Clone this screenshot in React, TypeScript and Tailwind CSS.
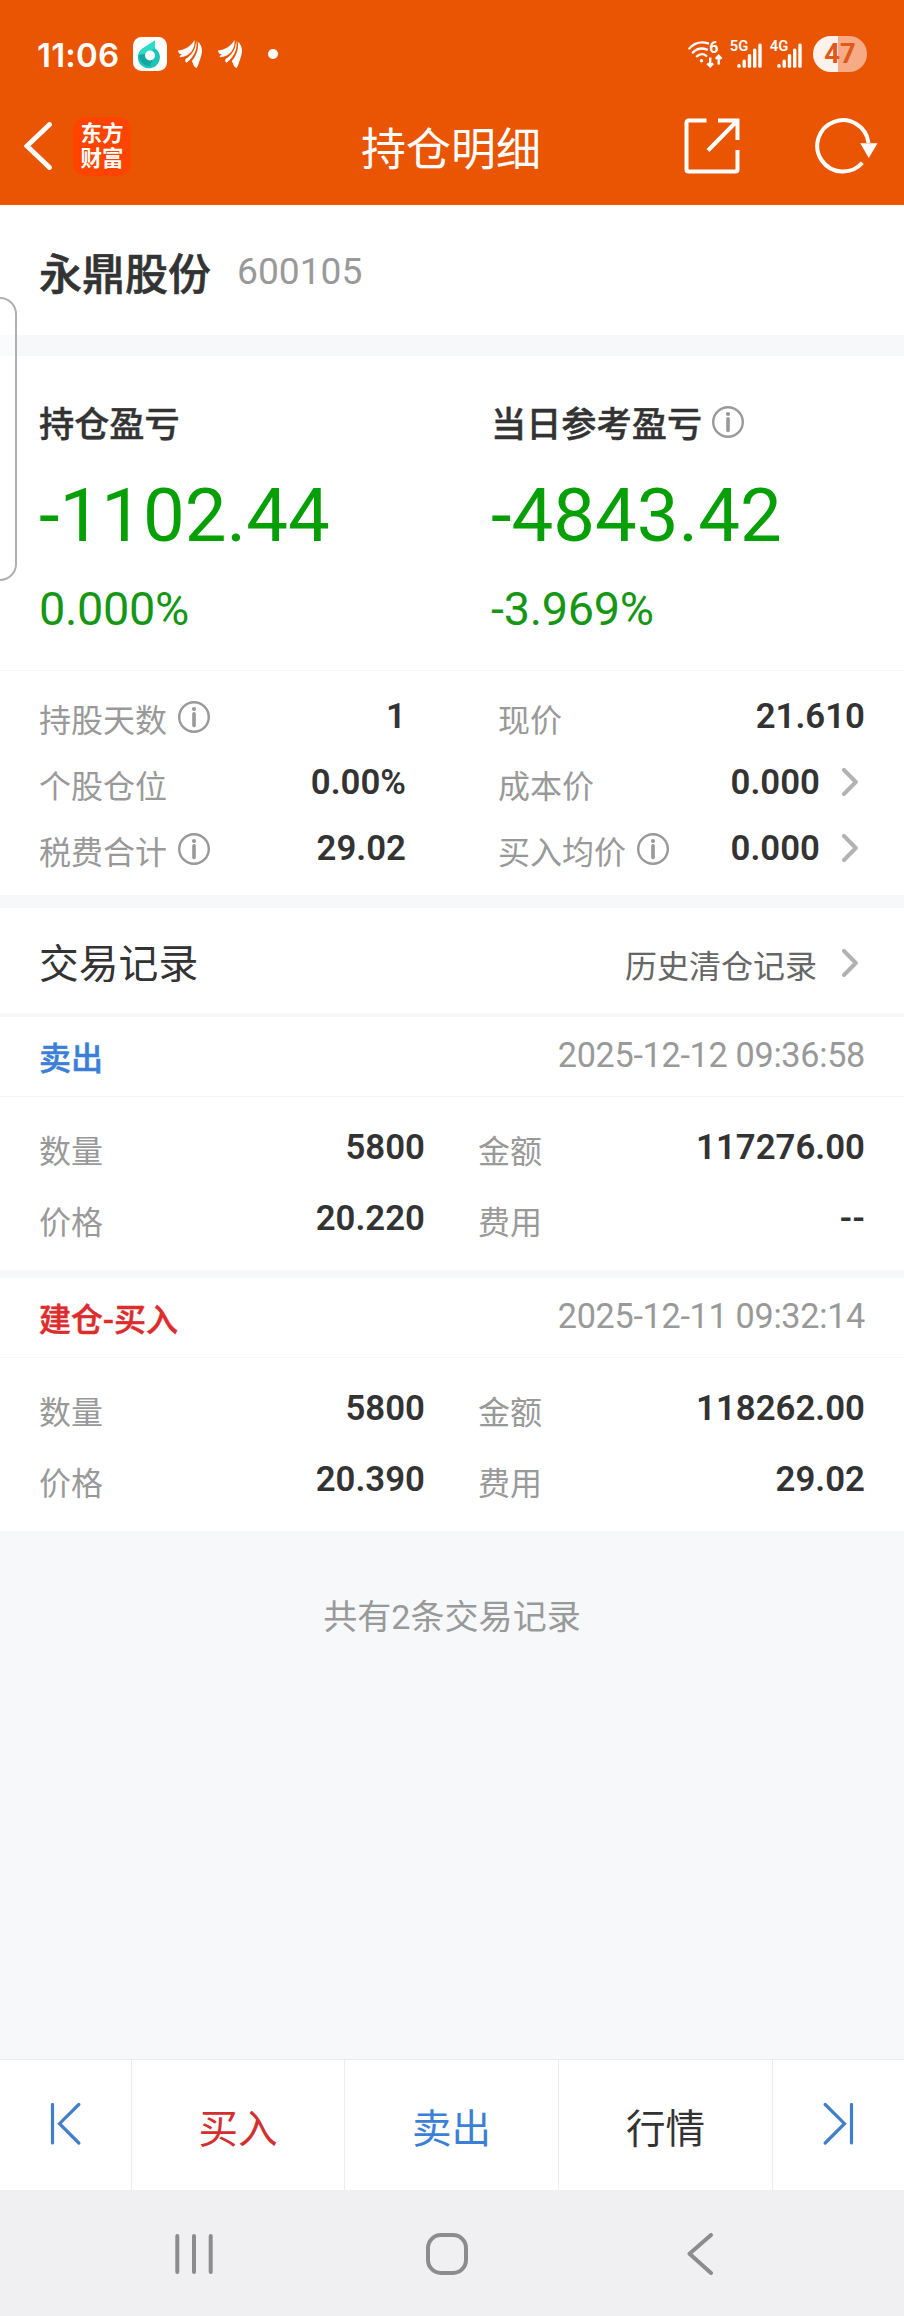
import type { ReactNode } from "react";

type Cell = { label: string; value: string; info?: boolean; link?: boolean };

type Trade = {
  title: string;
  color: string;
  time: string;
  left: Cell[];
  right: Cell[];
};

const POSITION_LEFT: Cell[] = [
  { label: "持股天数", value: "1", info: true },
  { label: "个股仓位", value: "0.00%" },
  { label: "税费合计", value: "29.02", info: true },
];

const POSITION_RIGHT: Cell[] = [
  { label: "现价", value: "21.610" },
  { label: "成本价", value: "0.000", link: true },
  { label: "买入均价", value: "0.000", info: true, link: true },
];

const TRADES: Trade[] = [
  {
    title: "卖出",
    color: "text-[#3c7fd6]",
    time: "2025-12-12 09:36:58",
    left: [
      { label: "数量", value: "5800" },
      { label: "价格", value: "20.220" },
    ],
    right: [
      { label: "金额", value: "117276.00" },
      { label: "费用", value: "--" },
    ],
  },
  {
    title: "建仓-买入",
    color: "text-[#dd2c2c]",
    time: "2025-12-11 09:32:14",
    left: [
      { label: "数量", value: "5800" },
      { label: "价格", value: "20.390" },
    ],
    right: [
      { label: "金额", value: "118262.00" },
      { label: "费用", value: "29.02" },
    ],
  },
];

function InfoIcon() {
  return (
    <svg className="size-8 shrink-0" viewBox="0 0 32 32" fill="none" stroke="#999">
      <circle cx="16" cy="16" r="14.800" strokeWidth="2.400" />
      <path d="M16 12.800v11.700" strokeWidth="3.600" strokeLinecap="round" />
      <circle cx="16" cy="8" r="2.100" fill="#999" stroke="none" />
    </svg>
  );
}

function ChevronRight() {
  return (
    <svg className="h-7 w-4 shrink-0" viewBox="0 0 16 28" fill="none" stroke="#b2b2b2" strokeWidth="4">
      <path d="M2 2 13.800 14 2 26" strokeLinecap="round" strokeLinejoin="round" />
    </svg>
  );
}

function WingIcon() {
  return (
    <svg className="h-7 w-6 shrink-0" viewBox="0 0 24 28" fill="#fff">
      <path d="M0 10.500C6 10 12.500 7 16.500 0C17.500 9 11.500 17 1.800 17.200C1.300 15.800 2.500 15 4.500 14.200C2 14.500 .2 13.500 0 10.500Z" />
      <path d="M18 .2C20 8 17 16 8.500 22.800C7 21.800 6.800 20.300 7.800 18.800C13.500 15.500 18.200 9 18 .2Z" />
      <path d="M19.800 1.800C24.500 5 25 12 22.500 18C21.300 21.500 20.500 25 18.500 28C16.500 27 15.200 25.500 15 23.200C14.500 22.800 14 22 13.800 21C18.500 16 20.800 9 19.800 1.800Z" />
    </svg>
  );
}

function WifiIcon() {
  return (
    <svg className="h-[35px] w-[35px] shrink-0" viewBox="0 -4 35 35" fill="none" stroke="#fff">
      <g strokeWidth="2.300" strokeLinecap="round">
        <path d="M1.300 7.500C6.500 1.800 13.500 .4 20 2.400" />
        <path d="M4.800 11.600C9 7.400 14 6.600 19 8.600" />
        <path d="M8.800 15.300C12 12.500 15.300 12.500 18.300 14.800" />
      </g>
      <circle cx="13.500" cy="19.800" r="1.700" fill="#fff" stroke="none" />
      <path d="M22.200 16.500v8.500M19.300 22.300l2.900 3 2.900-3M30.700 23.500V15M27.800 17.800l2.900-3 2.900 3" strokeWidth="2.400" />
      <text x="21.300" y="12.300" fontSize="16" fontWeight="700" fill="#fff" stroke="none" fontFamily="Roboto, sans-serif">
        6
      </text>
    </svg>
  );
}

function SignalIcon({ label }: { label: string }) {
  return (
    <svg className="h-9 w-[34px] shrink-0" viewBox="-2 -4 34 36" fill="#fff">
      <text x="-.3" y="11.300" fontSize="14.800" fontWeight="600" fontFamily="Roboto, sans-serif">
        {label}
      </text>
      <rect x="7.300" y="24" width="3.400" height="3.800" rx="1.500" />
      <rect x="12.500" y="19.500" width="3.400" height="8.300" rx="1.500" />
      <rect x="17.800" y="14" width="3.400" height="13.800" rx="1.500" />
      <rect x="23" y="8.500" width="3.400" height="19.300" rx="1.500" />
      <rect x="28.300" y="3.500" width="3.400" height="24.300" rx="1.500" />
    </svg>
  );
}

function StatusBar() {
  return (
    <div className="flex h-[108px] items-center pr-[37px] pl-[37px] text-white">
      <span className="mt-[2px] w-[96px] font-[Inter,sans-serif] text-[33px] leading-[40px] font-semibold tracking-[0.2px]">
        11:06
      </span>
      <svg className="size-[34px] shrink-0" viewBox="0 0 34 34">
        <rect width="34" height="34" rx="8.500" fill="#fff" />
        <path d="M22 3.500V11.200A11 11 0 1 1 8.200 12.500Z" fill="#1fc4b8" />
        <path d="M22 3.500 8.200 12.500 6 18l6-1 10-5.800Z" fill="#2bdccb" />
        <path d="M6 18a11 11 0 0 0 11 11l3-7-7-5Z" fill="#12a79f" />
        <circle cx="17" cy="18.500" r="5" fill="#fff" />
      </svg>
      <div className="ml-[11px] flex gap-4">
        <WingIcon />
        <WingIcon />
      </div>
      <span className="ml-[26px] size-[10px] rounded-full bg-white" />
      <div className="ml-auto flex items-center">
        <WifiIcon />
        <div className="ml-[5px] flex gap-[6px]">
          <SignalIcon label="5G" />
          <SignalIcon label="4G" />
        </div>
        <span className="ml-[11px] flex h-9 w-[54px] items-center justify-center rounded-full bg-linear-to-r from-[#fff2ec] from-46% to-[#f6ab84] to-46% text-[27.500px] leading-9 font-bold text-[#e0581a]">
          47
        </span>
      </div>
    </div>
  );
}

function TitleBar() {
  return (
    <div className="flex h-[76px] items-center pr-[26px] pl-6 text-white">
      <svg className="h-12 w-7 shrink-0" viewBox="0 0 28 48" fill="none" stroke="#fff" strokeWidth="4.800">
        <path d="M25.500 2.500 3 24l22.500 21.500" strokeLinecap="round" strokeLinejoin="miter" />
      </svg>
      <div className="ml-[21px] flex h-[59px] w-[58px] flex-col items-center justify-center rounded-[13px] bg-[#ff4400] text-[21.500px] leading-[25px] font-bold">
        <span>东方</span>
        <span>财富</span>
      </div>
      <h1 className="mt-[10px] ml-[230px] text-[45px] leading-[60px]">持仓明细</h1>
      <svg className="ml-auto size-14 shrink-0" viewBox="0 0 56 56" fill="none" stroke="#fff" strokeWidth="4">
        <path d="M22.500 2.500H4.500a2 2 0 0 0-2 2V51.500a2 2 0 0 0 2 2H51.500a2 2 0 0 0 2-2V32" />
        <path d="M34 2.500H53.500V22M53 3 24 32.500" />
      </svg>
      <svg className="ml-[75px] h-14 w-[63px] shrink-0" viewBox="0 0 63 56" fill="none">
        <path d="M47.300 44.800A25.700 25.700 0 1 1 53.500 25" stroke="#fff" strokeWidth="4" />
        <path d="M45.200 25.300H62.500L53.800 40Z" fill="#fff" />
      </svg>
    </div>
  );
}

function Profit({ label, amount, rate, info }: { label: string; amount: string; rate: string; info?: boolean }) {
  return (
    <div className="w-[452px] shrink-0 pt-[38px]">
      <div className="flex h-[56px] items-center gap-[10px]">
        <span className="mt-[6px] text-[35.200px] leading-[50px] font-medium [-webkit-text-stroke:0.4px]">{label}</span>
        {info && <InfoIcon />}
      </div>
      <div className="mt-[16px] text-[74.300px] leading-[100px] text-[#069f06]">{amount}</div>
      <div className="mt-[13px] text-[46.800px] leading-[60px] tracking-[-0.3px] text-[#159615]">{rate}</div>
    </div>
  );
}

function Row({ cell, className }: { cell: Cell; className: string }) {
  return (
    <div className={`flex items-center ${className}`}>
      <span className="mt-[8px] text-[32px] leading-[40px] text-[#999]">{cell.label}</span>
      {cell.info && (
        <span className="ml-[11px]">
          <InfoIcon />
        </span>
      )}
      <span className="-mt-[2px] ml-auto text-[34.800px] leading-[40px] font-semibold">{cell.value}</span>
      {cell.link && (
        <span className="-mt-[2px] mr-[7px] ml-[22px]">
          <ChevronRight />
        </span>
      )}
    </div>
  );
}

function TradeCard({ trade }: { trade: Trade }) {
  return (
    <section className="bg-white">
      <div className="flex h-[80px] items-center justify-between border-b border-[#f5f6f7] pr-[39px] pl-[39px]">
        <span className={`mt-[4px] text-[32px] leading-[40px] font-medium [-webkit-text-stroke:0.5px] ${trade.color}`}>
          {trade.title}
        </span>
        <span className="-mt-[4px] text-[34.200px] leading-[40px] tracking-[-0.3px] text-[#999]">{trade.time}</span>
      </div>
      <div className="flex h-[173px] justify-between pt-[15px] pr-[39px] pl-[39px]">
        <div className="w-[386px]">
          {trade.left.map((c) => (
            <Row key={c.label} cell={c} className="h-[71px]" />
          ))}
        </div>
        <div className="w-[387px]">
          {trade.right.map((c) => (
            <Row key={c.label} cell={c} className="h-[71px]" />
          ))}
        </div>
      </div>
    </section>
  );
}

function Tab({ children, className }: { children: ReactNode; className: string }) {
  return (
    <button className={`flex items-center justify-center border-r border-[#ebecee] pt-[10px] text-[39.600px] leading-[56px] ${className}`}>
      {children}
    </button>
  );
}

function BottomBar() {
  return (
    <nav className="flex h-[131px] border-t border-[#ebecee] bg-white">
      <div className="flex w-[132px] border-r border-[#ebecee] pt-[43px] pl-[50px]">
        <svg className="h-[42px] w-[31px]" viewBox="0 0 31 42" fill="none" stroke="#427fc9" strokeWidth="3.200">
          <path d="M2.500 1.500v38.500M28.800 1.500 9.500 20.700l19.300 19.300" strokeLinecap="round" />
        </svg>
      </div>
      <Tab className="w-[213px] text-[#d32f2f]">买入</Tab>
      <Tab className="w-[214px] text-[#3c7fd6]">卖出</Tab>
      <Tab className="w-[214px] text-[#333]">行情</Tab>
      <div className="flex pt-[43px] pl-[50px]">
        <svg className="h-[42px] w-[31px]" viewBox="0 0 31 42" fill="none" stroke="#427fc9" strokeWidth="3.200">
          <path d="M28.500 1.500v38.500M2.200 1.500 21.500 20.700 2.200 40" strokeLinecap="round" />
        </svg>
      </div>
    </nav>
  );
}

function SystemNav() {
  return (
    <div className="flex h-[126px] bg-[#f0f0f2] pt-[43px] pl-[175px]">
      <svg className="h-[42px] w-[38px]" viewBox="0 0 38 42" stroke="#8c8c8c" strokeWidth="4" strokeLinecap="round">
        <path d="M2.300 3v36M19 3v36M35.700 3v36" />
      </svg>
      <svg className="ml-[213px] h-[42px] w-[42px]" viewBox="0 0 42 42" fill="none" stroke="#8c8c8c" strokeWidth="4">
        <rect x="2" y="2" width="38" height="38" rx="13" />
      </svg>
      <svg className="ml-[219px] h-[42px] w-[27px]" viewBox="0 0 27 42" fill="none" stroke="#8c8c8c" strokeWidth="4">
        <path d="M24 2 2.500 20.700 24 40" strokeLinecap="round" strokeLinejoin="round" />
      </svg>
    </div>
  );
}

export default function App() {
  return (
    <div className="relative flex h-[2316px] w-[904px] flex-col overflow-hidden bg-[#f6f8fa] font-[Roboto,'Noto_Sans_CJK_SC',sans-serif] text-[#333]">
      <header className="h-[205px] bg-[#ea5504]">
        <StatusBar />
        <TitleBar />
      </header>

      <section className="flex h-[130px] bg-white pt-[36px] pl-[39px]">
        <h2 className="mt-[4px] h-[60px] text-[43px] leading-[60px] font-medium [-webkit-text-stroke:0.6px]">永鼎股份</h2>
        <span className="ml-[26px] text-[37.200px] leading-[60px] text-[#999]">600105</span>
      </section>

      <section className="mt-[21px] bg-white">
        <div className="flex h-[315px] border-b border-[#f5f6f7] pl-[39px]">
          <Profit label="持仓盈亏" amount="-1102.44" rate="0.000%" />
          <Profit label="当日参考盈亏" amount="-4843.42" rate="-3.969%" info />
        </div>
        <div className="flex h-[224px] justify-between pt-[13px] pr-[39px] pl-[39px]">
          <div className="w-[367px]">
            {POSITION_LEFT.map((c) => (
              <Row key={c.label} cell={c} className="h-[66px]" />
            ))}
          </div>
          <div className="w-[367px]">
            {POSITION_RIGHT.map((c) => (
              <Row key={c.label} cell={c} className="h-[66px]" />
            ))}
          </div>
        </div>
      </section>

      <section className="mt-[13px] flex h-[105px] items-center bg-white pr-[46px] pb-[1px] pl-[39px]">
        <h3 className="mt-[9px] text-[39.800px] leading-[56px]">交易记录</h3>
        <span className="mt-[13px] mr-[25px] ml-auto text-[32px] leading-[40px] text-[#666]">历史清仓记录</span>
        <span className="mt-[5px]">
          <ChevronRight />
        </span>
      </section>

      <div className="mt-1 flex flex-col gap-2">
        {TRADES.map((t) => (
          <TradeCard key={t.time} trade={t} />
        ))}
      </div>

      <p className="mt-[61px] text-center text-[34.100px] leading-[50px] text-[#999]">共有2条交易记录</p>

      <div className="mt-auto">
        <BottomBar />
        <SystemNav />
      </div>

      {/* edge panel handle floating over the page */}
      <div className="absolute top-[297px] -left-[20px] h-[284px] w-[37px] rounded-[17px] border-2 border-[#b0b0b0] bg-white/40" />
    </div>
  );
}
